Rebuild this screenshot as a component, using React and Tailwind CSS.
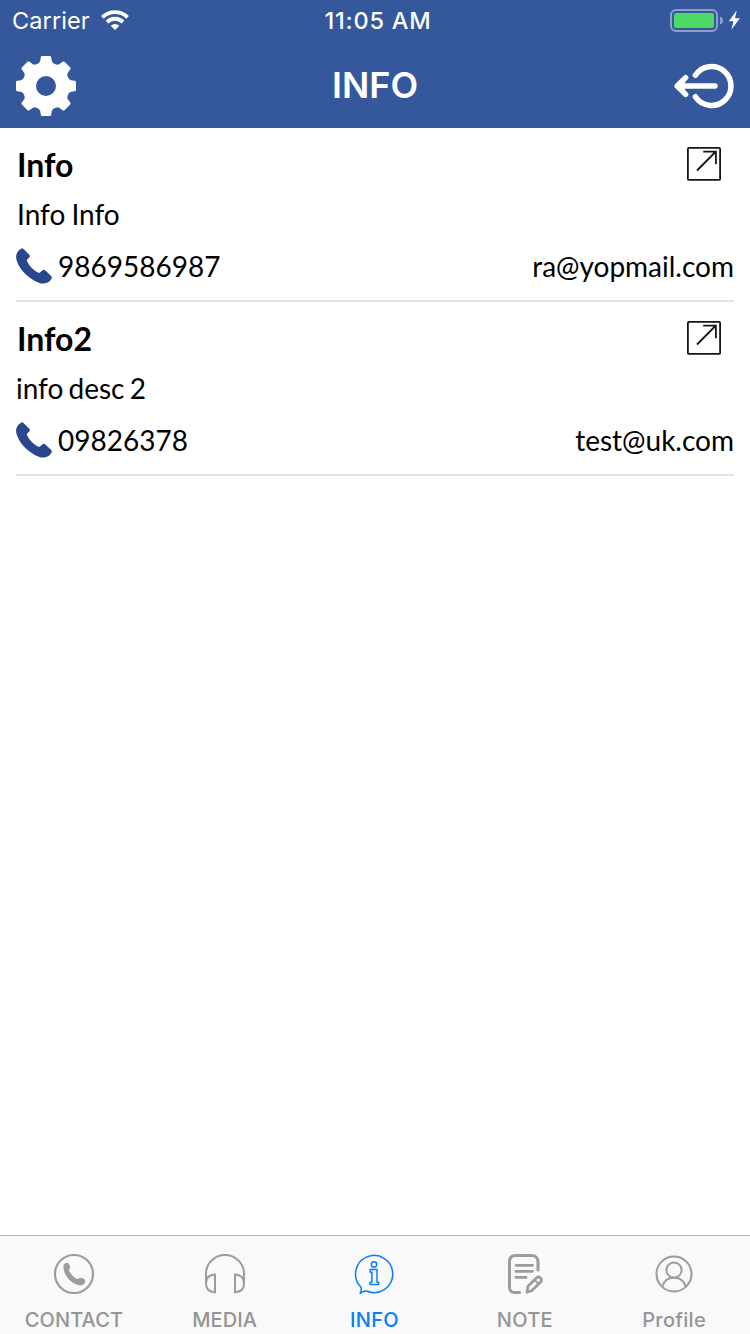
import React from "react";

const entries = [
  { title: "Info", desc: "Info Info", phone: "9869586987", email: "ra@yopmail.com", descClass: "pl-px [word-spacing:-1px]" },
  { title: "Info2", desc: "info desc 2", phone: "09826378", email: "test@uk.com", descClass: "[word-spacing:-2px]" },
];

const GEAR_QUARTER =
  "M30 30V0H26Q25 0 24.8 1.2L24.2 5Q23.5 7.5 20.5 8.3Q18 9.4 16.5 8L13.2 5.6Q12.3 5.2 11.5 5.8L5.8 11.5Q5.2 12.3 5.6 13.2L8 16.5Q9.4 18 8.3 20.5Q7.5 23.5 5 24.2L1.2 24.8Q0 25 0 26V30Z";

function GearIcon() {
  return (
    <svg width="60" height="60" viewBox="0 0 60 60" fill="#fff">
      <path d={GEAR_QUARTER} />
      <path d={GEAR_QUARTER} transform="rotate(90 30 30)" />
      <path d={GEAR_QUARTER} transform="rotate(180 30 30)" />
      <path d={GEAR_QUARTER} transform="rotate(270 30 30)" />
      <circle cx="30" cy="30" r="10" fill="#35579b" />
    </svg>
  );
}

function LogoutIcon() {
  return (
    <svg width="60" height="60" viewBox="0 0 60 60" fill="none" stroke="#fff" strokeWidth="5.5" strokeLinecap="round" strokeLinejoin="round">
      <path d="M21.4 19.3A19.4 19.4 0 1 1 21.4 40.7" />
      <path d="M4 30H41" />
      <path d="M11.6 21.6L3.2 30L11.6 38.4" />
      <path d="M1.5 30L11 22V38Z" fill="#fff" stroke="none" />
    </svg>
  );
}

function WifiIcon() {
  return (
    <svg width="28" height="20" viewBox="0 0 28 20" fill="none" stroke="#fff" strokeWidth="3.9">
      <path d="M1.4 7.3A18 18 0 0 1 26.6 7.3" />
      <path d="M6 12A11.4 11.4 0 0 1 22 12" />
      <path d="M14 20L9.7 15.7A6.2 6.2 0 0 1 18.3 15.7Z" fill="#fff" stroke="none" />
    </svg>
  );
}

function BatteryIcon() {
  return (
    <svg width="72" height="24" viewBox="0 0 72 24">
      <rect x="1" y="1" width="46" height="21" rx="5" fill="none" stroke="#8f9fc7" strokeWidth="2" />
      <rect x="4" y="4" width="40" height="15" rx="2" fill="#4cd964" />
      <path d="M50 7.5Q53 8.5 53 11.5T50 15.5Z" fill="#8f9fc7" />
      <path d="M66.8 1.2L58.8 12.3H63.5L61.3 20.8L70 9.2H65Z" fill="#fff" />
    </svg>
  );
}

function OpenIcon() {
  return (
    <svg width="36" height="36" viewBox="0 0 36 36" fill="none" stroke="#151515">
      <rect x="1.9" y="1.9" width="32.2" height="32" rx="1" strokeWidth="1.8" />
      <path d="M11 24.5L29.4 6M17.2 5.7H29.9V18.2" strokeWidth="1.8" />
    </svg>
  );
}

function PhoneIcon() {
  return (
    <svg width="36" height="36" viewBox="0 0 36 36" fill="#2a468d">
      <path d="M4.6 .9Q6 -.3 7.5 1L13.3 6.7Q14.6 8.2 13.2 9.5L11.2 11.5Q10.6 12.5 11.2 13.6Q14.7 21 22.3 24.7Q23.5 25.1 24.2 24.3L26.3 22.4Q27.9 21 29.4 22.4L35.2 28Q36.5 29.5 35.2 31.3Q31.5 36.5 24.8 35.4Q18.5 34 11 27.6Q3.5 21 .7 12.5Q-1.5 5 4.6 .9Z" />
    </svg>
  );
}

function ContactIcon() {
  return (
    <svg width="42" height="42" viewBox="0 0 42 42">
      <circle cx="21" cy="21" r="19" fill="none" stroke="#9c9c9c" strokeWidth="2.2" />
      <path d="M10.4 12.6Q11 10.2 13.8 9.8Q15.8 9.9 16.7 12.2Q17.6 14.7 16.3 16.3Q15.6 17.5 16.5 18.7Q19 23 23.2 25.8Q24.3 26.4 25.2 25.8Q27.5 24.2 30 25.3Q32.6 26.5 32.2 28.9Q31.4 31.6 28.6 32.2Q23.7 32.9 18.2 28.5Q10.2 21.7 10.4 12.6Z" fill="#9c9c9c" />
    </svg>
  );
}

function MediaIcon() {
  return (
    <svg width="42" height="42" viewBox="0 0 42 42" fill="none" stroke="#9c9c9c" strokeWidth="2">
      <path d="M2 30V20.6A19 18.6 0 0 1 40 20.6V30" />
      <path d="M11 21.6V39.2Q2 38.6 2 30.4Q2 22.2 11 21.6Z" />
      <path d="M31 21.6V39.2Q40 38.6 40 30.4Q40 22.2 31 21.6Z" />
    </svg>
  );
}

function InfoIcon() {
  return (
    <svg width="42" height="42" viewBox="0 0 42 42" fill="none" stroke="#0a7cff" strokeWidth="1.5" strokeLinejoin="round">
      <path d="M8 34.2A18.6 18.6 0 1 1 14.2 38.3Q12 37.4 7.1 40.3Q8.8 37 8 34.2Z" />
      <circle cx="21" cy="11.4" r="2.7" />
      <path d="M17.2 16.5H24V29.2H25.7V31.5H17V29.2H18.9V19.2H17.2Z" />
    </svg>
  );
}

function NoteIcon() {
  return (
    <svg width="42" height="42" viewBox="0 0 42 42" fill="none" stroke="#9c9c9c" strokeWidth="3" strokeLinecap="round" strokeLinejoin="round">
      <path d="M34 17V9Q34 2.6 27.5 2.6H11.5Q5.5 2.6 5.5 9V34Q5.5 39.4 10.5 39.4H15.6" />
      <path d="M12 12.3H28.5M12 18.3H28.5M12 24.4H22" strokeWidth="2.8" />
      <path d="M23.1 39.3L23.8 33.6L32.4 25Q34.4 23 36.5 25Q38.4 26.9 36.6 29L28 37.5Z" strokeWidth="2.8" />
      <path d="M30.5 27L34.5 30.8" strokeWidth="2" />
    </svg>
  );
}

function ProfileIcon() {
  return (
    <svg width="42" height="42" viewBox="0 0 42 42" fill="none" stroke="#9c9c9c" strokeWidth="2">
      <circle cx="21" cy="21" r="17.5" />
      <circle cx="21" cy="17" r="7.6" />
      <path d="M9 33.8Q11.8 24.7 21 24.7T33 33.8" />
    </svg>
  );
}

const tabs = [
  { label: "CONTACT", Icon: ContactIcon, spacing: "tracking-[0.1px]", pad: "pr-0.5" },
  { label: "MEDIA", Icon: MediaIcon, spacing: "tracking-[0.1px]", pad: "" },
  { label: "INFO", Icon: InfoIcon, active: true, spacing: "tracking-[0.3px]", pad: "" },
  { label: "NOTE", Icon: NoteIcon, spacing: "tracking-[0.3px]", pad: "pl-px" },
  { label: "Profile", Icon: ProfileIcon, spacing: "tracking-[0.3px]", pad: "" },
];

export default function App() {
  return (
    <div className="flex h-[1334px] w-[750px] flex-col overflow-hidden bg-white font-['Inter',sans-serif]">
      <header className="h-32 bg-[#35579b] text-white">
        <div className="grid h-10 grid-cols-3 items-center pt-px">
          <div className="flex items-center gap-[11px] pl-3">
            <span className="text-[23.5px] leading-10 tracking-[0.1px]">Carrier</span>
            <span className="pb-0.5"><WifiIcon /></span>
          </div>
          <div className="pl-1.5 text-center text-[23.5px] leading-10 font-medium tracking-[0.8px]">11:05 AM</div>
          <div className="flex justify-end pr-2 pb-px">
            <BatteryIcon />
          </div>
        </div>
        <div className="flex h-[88px] items-center justify-between px-4 pb-px">
          <button className="pt-[5px]"><GearIcon /></button>
          <h1 className="pt-[3px] text-[36px] leading-10 font-semibold">INFO</h1>
          <button className="pt-[5px]"><LogoutIcon /></button>
        </div>
      </header>
      <main className="flex-1 px-4 font-['Lato',sans-serif] text-black">
        {entries.map((e) => (
          <article key={e.title} className="flex h-[174px] flex-col border-b-2 border-[#e3e3e3] pt-[17px]">
            <div className="flex h-10 items-start justify-between pr-3">
              <h2 className="pl-px text-[32px] leading-10 font-bold">{e.title}</h2>
              <span className="pt-px"><OpenIcon /></span>
            </div>
            <p className={`mt-[9px] text-[28px] leading-10 ${e.descClass}`}>{e.desc}</p>
            <div className="mt-3 flex h-10 items-center">
              <PhoneIcon />
              <span className="ml-1.5 text-[28px] leading-10">{e.phone}</span>
              <span className="ml-auto text-[28px] leading-10">{e.email}</span>
            </div>
          </article>
        ))}
      </main>
      <nav className="grid h-[99px] grid-cols-5 border-t border-[#b2b2b2] bg-[#f9f9f9] pr-px">
        {tabs.map(({ label, Icon, active, spacing, pad }) => (
          <div key={label} className={`flex flex-col items-center pt-[17px] ${pad} ${active ? "text-[#0a7cff]" : "text-[#959595]"}`}>
            <Icon />
            <span className={`mt-[13px] text-[20px] leading-6 font-medium ${spacing}`}>{label}</span>
          </div>
        ))}
      </nav>
    </div>
  );
}
